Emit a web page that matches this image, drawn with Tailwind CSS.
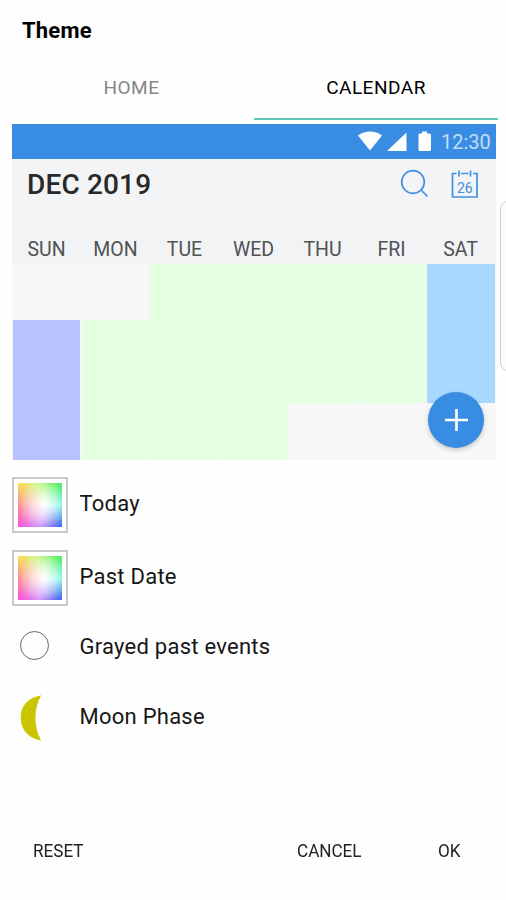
<!DOCTYPE html>
<html lang="en">
<head>
<meta charset="utf-8">
<title>Theme</title>
<script src="https://cdn.jsdelivr.net/npm/@tailwindcss/browser@4"></script>
</head>
<body class="bg-white">
<main class="relative flex h-[900px] w-[506px] flex-col overflow-hidden bg-[#fefefe] font-[Roboto,sans-serif] text-[#161616]">
  <h1 class="h-[61px] pl-[22px] pt-[15px] text-[22px] leading-8 font-bold tracking-[0.2px] text-black">Theme</h1>
  <nav class="ml-[9px] flex h-[59px] w-[489px] text-center text-[19px] leading-[54px]">
    <div class="w-[245px] tracking-[0.5px] text-[#858585]">HOME</div>
    <div class="w-[244px] border-b-2 border-[#5ec4b4] tracking-[0.5px] text-black">CALENDAR</div>
  </nav>

  <section class="relative mt-1 ml-3 flex h-[336px] w-[484px] flex-col bg-[#f7f7f7]">
    <div class="flex h-[35px] shrink-0 items-center justify-end bg-[#388de3] pr-[5px]">
      <svg class="h-[35px] w-[80px]" viewBox="0 0 80 35" fill="#fff"><path d="M1 11.500C8 6 18 6 25 11.500L13 26.500Z"/><path d="M49.500 8.500V27H30Z"/><path d="M62.500 9.500H65V7.500H70V9.500H72.500Q74 9.500 74 11V25.500Q74 27 72.500 27H62.500Q61.500 27 61.500 25.500V11Q61.500 9.500 62.500 9.500Z"/></svg>
      <span class="ml-[4px] w-[50px] text-[20px] leading-[36px] whitespace-nowrap text-[#c3dcf7]">12:30</span>
    </div>
    <header class="flex h-[70px] shrink-0 bg-[#f2f4f5] pl-[15px]">
      <h2 class="grow pt-[10px] text-[28px] leading-8 font-medium tracking-[0.15px] text-[#292929]">DEC 2019</h2>
      <svg class="mr-[17px] h-[50px] w-[80px]" viewBox="0 0 80 50" fill="none" stroke="#438fe0" stroke-width="1.700"><circle cx="14" cy="23" r="11.300"/><path d="M22 31L28.500 37.500"/><path d="M57.500 14.500H53.500V38H78V14.500H74M62 14.500H69.500M60 11.500V17.500M71.500 11.500V17.500"/><text x="65.800" y="33.500" text-anchor="middle" font-family="Roboto" font-size="14" fill="#438fe0" stroke="none">26</text></svg>
    </header>
    <div class="grid h-[35px] w-[483px] shrink-0 grid-cols-7 bg-[#f2f3f5] text-center text-[19.500px] leading-[42px] text-[#505254] outline-1 -outline-offset-1 outline-[#f2f3f5]">
      <div>SUN</div><div>MON</div><div>TUE</div><div>WED</div><div>THU</div><div>FRI</div><div>SAT</div>
    </div>
    <div class="grid w-[483px] grow grid-cols-7">
      <div class="mt-[56px] mr-px ml-px bg-[#b9c2ff]"></div>
      <div class="mt-[56px] mr-px ml-px bg-[#e5ffe2]"></div>
      <div class="mr-px bg-[#e5ffe2]"></div>
      <div class="mr-px bg-[#e5ffe2]"></div>
      <div class="mb-[57px] mr-px bg-[#e5ffe2]"></div>
      <div class="mb-[57px] bg-[#e5ffe2]"></div>
      <div class="mb-[57px] ml-px bg-[#a9d8ff]"></div>
    </div>
    <button class="absolute right-[12px] bottom-[12px] flex size-14 items-center justify-center rounded-full bg-[#388de3] shadow-[0_2px_5px_rgba(0,0,0,0.2)]" aria-label="Add"><svg class="size-6" viewBox="0 0 24 24" stroke="#fff" stroke-width="2.600"><path d="M12.500 1V23M1 12H24"/></svg></button>
  </section>

  <ul class="ml-3 flex flex-col text-[22px] text-[#161616]">
    <li class="mt-[17px] flex h-14 items-center gap-[11.500px]">
      <div class="size-14 border-[2.500px] border-[#cacaca] bg-white p-1"><svg class="size-full" viewBox="0 0 45 45" preserveAspectRatio="none"><use href="#spectrum"/></svg></div>
      <span class="pb-[4px] tracking-[0.250px]">Today</span>
    </li>
    <li class="mt-[17px] flex h-14 items-center gap-[11.500px]">
      <div class="size-14 border-[2.500px] border-[#cacaca] bg-white p-1"><svg class="size-full" viewBox="0 0 45 45" preserveAspectRatio="none"><use href="#spectrum"/></svg></div>
      <span class="pb-[4px] tracking-[0.250px]">Past Date</span>
    </li>
    <li class="mt-[4px] flex h-[70px] items-center gap-[11.500px]">
      <div class="flex w-14 pl-[7.500px]"><div class="size-[29px] rounded-full border-[1.500px] border-[#666]"></div></div>
      <span class="pt-[2px] tracking-[0.250px]">Grayed past events</span>
    </li>
    <li class="flex h-[72px] items-center gap-[11.500px]">
      <svg class="mt-[4px] h-[48px] w-14" viewBox="0 0 56 48"><path d="M29.200 1.300C14 4.500 8.800 13 8.800 24C8.800 34.500 15 44 29.200 46.500C21.500 33 21.500 15 29.200 1.300Z" fill="#c9c600"/></svg>
      <span class="tracking-[0.250px]">Moon Phase</span>
    </li>
  </ul>

  <footer class="mt-[85px] flex text-[19px] leading-[28px] text-[#222]">
    <div class="w-[264px] pl-[33px]"><span class="inline-block origin-left scale-x-[0.900]">RESET</span></div>
    <div class="w-[141px] pl-[33px]"><span class="inline-block origin-left scale-x-[0.900]">CANCEL</span></div>
    <div class="pl-[33px]"><span class="inline-block origin-left scale-x-[0.900]">OK</span></div>
  </footer>

  <div class="absolute top-[201px] left-[500px] h-[170px] w-5 rounded-[8px] border border-[#cfcfcf] bg-[#fcfcfc]"></div>
</main>
<svg class="absolute size-0" aria-hidden="true">
  <defs>
    <linearGradient id="top"><stop stop-color="#ffe04e"/><stop offset="0.450" stop-color="#ccf888"/><stop offset="1" stop-color="#45ed60"/></linearGradient>
    <linearGradient id="bottom"><stop stop-color="#ff4ed8"/><stop offset="0.500" stop-color="#cf90ff"/><stop offset="1" stop-color="#3d62f2"/></linearGradient>
    <linearGradient id="middle"><stop stop-color="#ff8a88"/><stop offset="0.600" stop-color="#ffffff"/><stop offset="1" stop-color="#7dfbe8"/></linearGradient>
    <linearGradient id="fadeDown" x2="0" y2="1"><stop stop-color="#fff"/><stop offset="0.500" stop-color="#000"/></linearGradient>
    <linearGradient id="fadeUp" x2="0" y2="1"><stop offset="0.500" stop-color="#000"/><stop offset="1" stop-color="#fff"/></linearGradient>
    <radialGradient id="glow" cx="0.550" cy="0.500" r="0.550"><stop stop-color="#fff" stop-opacity="0.550"/><stop offset="1" stop-color="#fff" stop-opacity="0"/></radialGradient>
    <mask id="m1"><rect width="45" height="45" fill="url(#fadeDown)"/></mask>
    <mask id="m2"><rect width="45" height="45" fill="url(#fadeUp)"/></mask>
    <g id="spectrum"><rect width="45" height="45" fill="url(#middle)"/><rect width="45" height="45" fill="url(#top)" mask="url(#m1)"/><rect width="45" height="45" fill="url(#bottom)" mask="url(#m2)"/><rect width="45" height="45" fill="url(#glow)"/></g>
  </defs>
</svg>
</body>
</html>
